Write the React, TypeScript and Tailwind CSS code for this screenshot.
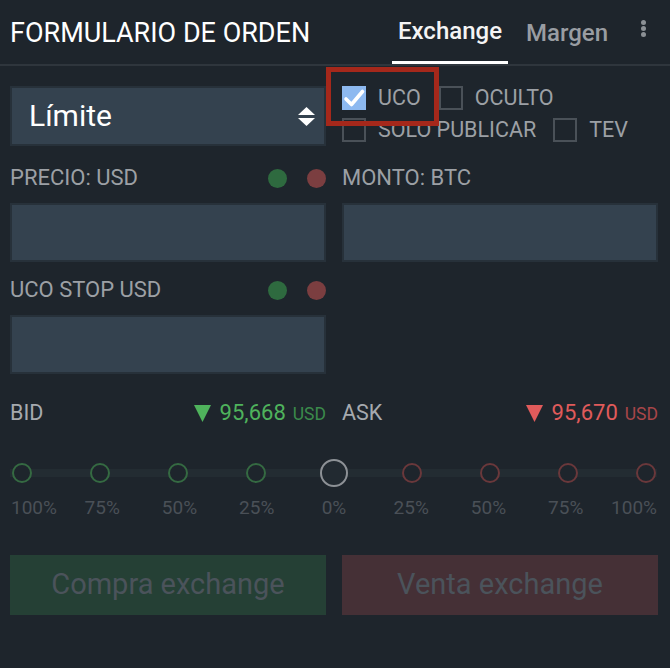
import React from "react"

const Check = ({ checked, label }: { checked?: boolean; label: string }) => {
    return (
        <div className="flex items-center">
            {checked ? (
                <div className="w-[24px] h-[24px] bg-[#8db9f0] flex items-center justify-center">
                    <svg width="24" height="24" viewBox="0 0 24 24">
                        <path d="M4 13 L9.5 18.5 L20.5 5.5" fill="none" stroke="#ffffff" strokeWidth="3.6" strokeLinecap="round" strokeLinejoin="round" />
                    </svg>
                </div>
            ) : (
                <div className="w-[24px] h-[24px] border-2 border-[#4a5158]"></div>
            )}
            <span className="ml-[12px] text-[21.5px] text-[#9ca0a5] leading-none">{label}</span>
        </div>
    )
}

const FieldLabel = ({ label, dots }: { label: string; dots?: boolean }) => {
    return (
        <div className="h-[24px] flex items-center justify-between">
            <span className="text-[22px] text-[#9ca0a5] leading-none">{label}</span>
            {dots && (
                <div className="flex items-center gap-[20px]">
                    <span className="w-[19px] h-[19px] rounded-full bg-[#2e6a3f]"></span>
                    <span className="w-[19px] h-[19px] rounded-full bg-[#7b3e40]"></span>
                </div>
            )}
        </div>
    )
}

const Input = () => {
    return <div className="mt-[13px] h-[59px] bg-[#34424f] border-2 border-[#27313a]"></div>
}

const Price = ({ value, up }: { value: string; up: boolean }) => {
    return (
        <div className="flex items-center">
            <svg width="17" height="17" viewBox="0 0 17 17">
                <polygon points="0,0 17,0 8.5,17" fill={up ? "#4fb35c" : "#e05b5b"} />
            </svg>
            <span className={"ml-[9px] text-[22px] leading-none " + (up ? "text-[#4fb35c]" : "text-[#e05b5b]")}>{value}</span>
            <span className={"ml-[7px] text-[17.5px] leading-none mt-[3px] " + (up ? "text-[#3b8a4b]" : "text-[#a84649]")}>USD</span>
        </div>
    )
}

const steps = [
    { label: "100%", kind: "g" },
    { label: "75%", kind: "g" },
    { label: "50%", kind: "g" },
    { label: "25%", kind: "g" },
    { label: "0%", kind: "c" },
    { label: "25%", kind: "r" },
    { label: "50%", kind: "r" },
    { label: "75%", kind: "r" },
    { label: "100%", kind: "r" },
]

export default function App() {
    return (
        <div className="w-[670px] h-[668px] bg-[#1e252c] font-['Roboto',sans-serif] overflow-hidden">
            {/* header */}
            <div className="h-[66px] flex items-stretch border-b-2 border-[#2f363d] pl-[10px]">
                <div className="flex items-center pt-[3px] text-[27px] text-white flex-1">FORMULARIO DE ORDEN</div>
                <div className="flex items-stretch">
                    <div className="px-[6px] flex items-center pt-[1px] text-[24px] font-medium text-[#f4f4f4] border-b-[3px] border-white">Exchange</div>
                    <div className="ml-[12px] px-[6px] flex items-center pt-[1px] text-[24px] font-medium text-[#999da2]">Margen</div>
                    <div className="ml-[27px] mr-[24px] flex flex-col items-center pt-[20px] gap-[1px]">
                        <span className="w-[5px] h-[5px] rounded-full bg-[#8b9095]"></span>
                        <span className="w-[5px] h-[5px] rounded-full bg-[#8b9095]"></span>
                        <span className="w-[5px] h-[5px] rounded-full bg-[#8b9095]"></span>
                    </div>
                </div>
            </div>

            <div className="pl-[10px] pr-[12px] pt-[20px]">
                <div className="grid grid-cols-[316px_316px] gap-x-[16px]">
                    <div className="h-[60px] bg-[#34424f] border-2 border-[#27313a] flex items-center justify-between pl-[17px] pr-[9px]">
                        <span className="text-[30px] text-white leading-none">Límite</span>
                        <svg width="17" height="19" viewBox="0 0 17 19">
                            <polygon points="0,8 8.5,0 17,8" fill="#ffffff" />
                            <polygon points="0,11 8.5,19 17,11" fill="#ffffff" />
                        </svg>
                    </div>
                    <div className="relative flex flex-col gap-[8px]">
                        <div className="flex items-center">
                            <Check checked label="UCO" />
                            <div className="ml-[18px]">
                                <Check label="OCULTO" />
                            </div>
                        </div>
                        <div className="flex items-center">
                            <Check label="SOLO PUBLICAR" />
                            <div className="ml-[17px]">
                                <Check label="TEV" />
                            </div>
                        </div>
                        <div className="absolute left-[-16px] top-[-19px] w-[113px] h-[59px] border-[5px] border-[#a5281b]"></div>
                    </div>

                    <div className="mt-[20px]">
                        <FieldLabel label="PRECIO: USD" dots />
                        <Input />
                    </div>
                    <div className="mt-[20px]">
                        <FieldLabel label="MONTO: BTC" />
                        <Input />
                    </div>

                    <div className="mt-[16px]">
                        <FieldLabel label="UCO STOP USD" dots />
                        <Input />
                    </div>
                    <div></div>

                    <div className="mt-[27px] h-[24px] flex items-center justify-between">
                        <span className="text-[21.5px] text-[#a6aaaf] leading-none">BID</span>
                        <Price value="95,668" up />
                    </div>
                    <div className="mt-[27px] h-[24px] flex items-center justify-between">
                        <span className="text-[21.5px] text-[#a6aaaf] leading-none">ASK</span>
                        <Price value="95,670" up={false} />
                    </div>
                </div>
            </div>

            {/* slider */}
            <div className="relative mt-[34px] pl-[8px] pr-[10px]">
                <div className="absolute left-[10px] right-[13px] top-[10px] h-[8px] bg-[#232c32]"></div>
                <div className="relative flex justify-between h-[28px]">
                    {steps.map((s, i) => (
                        <div key={i} className="w-[28px] flex items-center justify-center">
                            {s.kind === "c" ? (
                                <span className="w-[28px] h-[28px] rounded-full border-2 border-[#8d9196] bg-[#222a31]"></span>
                            ) : (
                                <span
                                    className={
                                        "w-[20px] h-[20px] rounded-full border-2 bg-[#1e252c] " +
                                        (s.kind === "g" ? "border-[#356a42]" : "border-[#6a383b]")
                                    }
                                ></span>
                            )}
                        </div>
                    ))}
                </div>
                <div className="flex justify-between mt-[10px] h-[22px]">
                    {steps.map((s, i) => (
                        <div
                            key={i}
                            className={
                                "w-[28px] flex items-center whitespace-nowrap text-[19px] text-[#4a5057] " +
                                (i === 0 ? "justify-start ml-[3px]" : i === 8 ? "justify-end mr-[3px]" : "justify-center")
                            }
                        >
                            {s.label}
                        </div>
                    ))}
                </div>
            </div>

            {/* buttons */}
            <div className="pl-[10px] pr-[12px] mt-[36px] grid grid-cols-[316px_316px] gap-x-[16px]">
                <button className="h-[60px] bg-[#254035] text-[29px] text-[#4b535b]">Compra exchange</button>
                <button className="h-[60px] bg-[#453036] text-[29px] text-[#4b535b]">Venta exchange</button>
            </div>
        </div>
    )
}
